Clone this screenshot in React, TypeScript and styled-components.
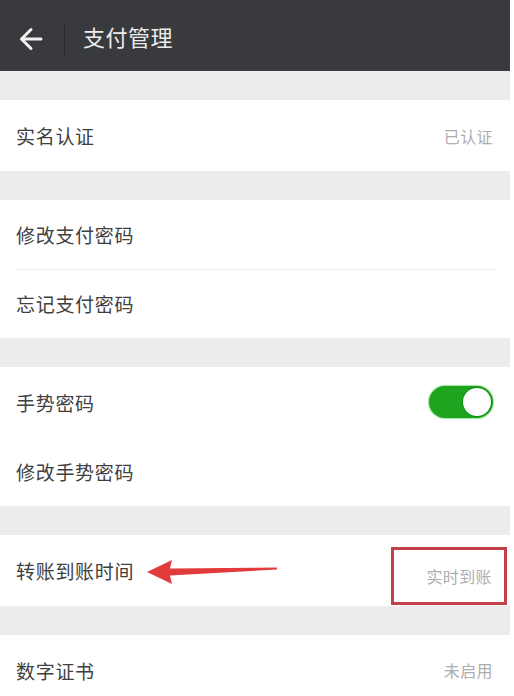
import React from 'react';
import styled, { createGlobalStyle } from 'styled-components';

const GlobalStyle = createGlobalStyle`
  html, body {
    margin: 0;
    padding: 0;
    background: #ffffff;
  }
  body {
    font-family: "Noto Sans CJK SC", "Noto Sans", sans-serif;
  }
`;

const Page = styled.div`
  width: 510px;
  min-height: 696px;
  background: #ececee;
  overflow: hidden;
`;

const Header = styled.header`
  height: 71px;
  background: #393a3d;
  display: flex;
  align-items: center;
  box-sizing: border-box;
  padding-left: 18px;
`;

const BackButton = styled.button`
  width: 26px;
  height: 26px;
  padding: 0;
  border: none;
  background: none;
  display: flex;
  align-items: center;
  justify-content: center;
  margin-top: 6px;
  cursor: pointer;
`;

const HeaderDivider = styled.span`
  width: 1px;
  height: 34px;
  background: #2c2d30;
  margin: 6px 18px 0 20px;
`;

const Title = styled.h1`
  margin: 0;
  font-size: 22px;
  font-weight: 400;
  color: #ececec;
  letter-spacing: 0.5px;
`;

const Group = styled.section`
  margin-top: 29px;
  background: #ffffff;
`;

const Row = styled.div<{ h: number }>`
  position: relative;
  height: ${({ h }) => h}px;
  display: flex;
  align-items: center;
  justify-content: space-between;
  padding: 0 17px 0 16px;
  box-sizing: border-box;

  & + &::before {
    content: '';
    position: absolute;
    top: 0;
    left: 15px;
    right: 15px;
    height: 1px;
    background: #ececec;
  }
`;

const Label = styled.span`
  font-size: 19px;
  color: #404040;
  letter-spacing: 0.7px;
`;

const Value = styled.span`
  font-size: 16px;
  color: #adadad;
  letter-spacing: 0.4px;
`;

const Switch = styled.span<{ on: boolean }>`
  position: relative;
  width: 64px;
  height: 32px;
  border-radius: 16px;
  background: ${({ on }) => (on ? '#1ea41e' : '#dcdcdc')};
  box-shadow: 0 0 1px 1px ${({ on }) => (on ? 'rgba(60, 200, 60, 0.5)' : 'transparent')};

  &::after {
    content: '';
    position: absolute;
    top: 2px;
    left: ${({ on }) => (on ? '34px' : '2px')};
    width: 28px;
    height: 28px;
    border-radius: 50%;
    background: #ffffff;
    box-shadow: 0 0 0 1px rgba(0, 80, 0, 0.3);
  }
`;

// red annotation frame around the transfer time value
const MarkBox = styled.div`
  position: absolute;
  left: 391px;
  top: 12px;
  width: 116px;
  height: 58px;
  box-sizing: border-box;
  border: 3px solid #c2414b;
  display: flex;
  align-items: center;
  justify-content: flex-end;
  padding-right: 12px;
`;

const PointerArrow = styled.svg`
  position: absolute;
  left: 145px;
  top: 24px;
`;

const BackArrow = () => (
  <svg width="24" height="24" viewBox="0 0 24 24" fill="none">
    <path
      d="M22 12H3M12 2.5L2.5 12L12 21.5"
      stroke="#f2f2f2"
      strokeWidth="3"
      strokeLinecap="round"
      strokeLinejoin="round"
    />
  </svg>
);

const App: React.FC = () => {
  return (
    <>
      <GlobalStyle />
      <Page>
        <Header>
          <BackButton aria-label="返回">
            <BackArrow />
          </BackButton>
          <HeaderDivider />
          <Title>支付管理</Title>
        </Header>

        <Group>
          <Row h={71}>
            <Label>实名认证</Label>
            <Value>已认证</Value>
          </Row>
        </Group>

        <Group>
          <Row h={69}>
            <Label>修改支付密码</Label>
          </Row>
          <Row h={69}>
            <Label>忘记支付密码</Label>
          </Row>
        </Group>

        <Group>
          <Row h={70}>
            <Label>手势密码</Label>
            <Switch on />
          </Row>
          <Row h={69}>
            <Label>修改手势密码</Label>
          </Row>
        </Group>

        <Group>
          <Row h={71}>
            <Label>转账到账时间</Label>
            <PointerArrow width="134" height="26" viewBox="0 0 134 26">
              <path
                d="M2 13 L27 1 L25 9.5 L132 8.5 L132 10.5 L25 16.5 L27 25 Z"
                fill="#e23b3b"
              />
            </PointerArrow>
            <MarkBox>
              <Value>实时到账</Value>
            </MarkBox>
          </Row>
        </Group>

        <Group>
          <Row h={70}>
            <Label>数字证书</Label>
            <Value>未启用</Value>
          </Row>
        </Group>
      </Page>
    </>
  );
};

export default App;
